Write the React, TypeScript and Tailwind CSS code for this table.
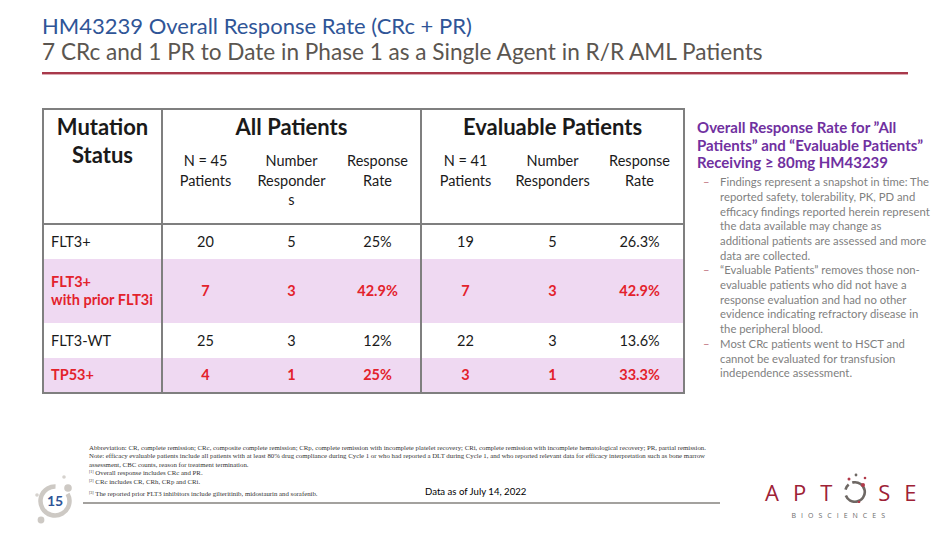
import React from 'react'

const rows = [
  { label: ['FLT3+'], vals: ['20', '5', '25%', '19', '5', '26.3%'], hl: false, h: 'h-[35px]' },
  { label: ['FLT3+', 'with prior FLT3i'], vals: ['7', '3', '42.9%', '7', '3', '42.9%'], hl: true, h: 'h-[64px]' },
  { label: ['FLT3-WT'], vals: ['25', '3', '12%', '22', '3', '13.6%'], hl: false, h: 'h-[35px]' },
  { label: ['TP53+'], vals: ['4', '1', '25%', '3', '1', '33.3%'], hl: true, h: 'h-[35px]' },
]

// line breaks as they fall on the slide
const bullets = [
  [
    'Findings represent a snapshot in time: The',
    'reported safety, tolerability, PK, PD and',
    'efficacy findings reported herein represent',
    'the data available may change as',
    'additional patients are assessed and more',
    'data are collected.',
  ],
  [
    '\u201cEvaluable Patients\u201d removes those non-',
    'evaluable patients who did not have a',
    'response evaluation and had no other',
    'evidence indicating refractory disease in',
    'the peripheral blood.',
  ],
  ['Most CRc patients went to HSCT and', 'cannot be evaluated for transfusion', 'independence assessment.'],
]

const PageBadge = () => (
  <svg width="56" height="58" viewBox="0 0 56 58">
    <circle cx="29" cy="30" r="14.5" fill="none" stroke="#cdc9c4" strokeWidth="4.5" strokeDasharray="76 15" transform="rotate(-30 29 30)" />
    <circle cx="42" cy="17" r="3.8" fill="#cdc9c4" />
    <circle cx="38" cy="6" r="1.8" fill="#d6d2ce" />
    <circle cx="11" cy="24" r="1.8" fill="#d6d2ce" />
    <circle cx="15" cy="49" r="3.4" fill="#cdc9c4" />
    <text x="29" y="35" textAnchor="middle" fontFamily="Lato, sans-serif" fontWeight="700" fontSize="14" fill="#2f5597">15</text>
  </svg>
)

const Logo = () => (
  <div className="flex flex-col items-center">
    <div className="flex items-center text-[22px] leading-[22px] font-normal text-[#9e2236] tracking-[14px]" style={{ fontFamily: '"Open Sans", sans-serif' }}>
      <span>APT</span>
      <svg width="28" height="30" viewBox="0 0 28 30" className="-ml-[4px] mr-[8px] -mt-[7px]">
        <circle cx="13" cy="19" r="9.8" fill="none" stroke="#6e6864" strokeWidth="2.6" strokeDasharray="44 6 6 4" transform="rotate(-100 13 19)" />
        <circle cx="7" cy="6" r="1.5" fill="#b23a4a" />
        <circle cx="14" cy="2" r="1.4" fill="#6e6864" />
        <circle cx="21" cy="12" r="2" fill="#b23a4a" />
        <circle cx="23" cy="5" r="1.3" fill="#b23a4a" />
        <circle cx="17" cy="29" r="1.3" fill="#b23a4a" />
      </svg>
      <span className="-mr-[14px]">SE</span>
    </div>
    <div className="mt-[9px] text-[7px] leading-[8px] tracking-[5px] text-[#6b6b6b]" style={{ fontFamily: '"Open Sans", sans-serif' }}>
      BIOSCIENCES
    </div>
  </div>
)

export default function App() {
  return (
    <div className="w-[950px] h-[534px] bg-white overflow-hidden flex flex-col" style={{ fontFamily: 'Lato, "Open Sans", sans-serif' }}>
      {/* Title */}
      <div className="pl-[42px] pt-[13px]">
        <div className="text-[22px] leading-[26px] text-[#2f5597]">HM43239 Overall Response Rate (CRc + PR)</div>
        <div className="text-[22.6px] leading-[26px] text-[#5b5650]">7 CRc and 1 PR to Date in Phase 1 as a Single Agent in R/R AML Patients</div>
        <div className="mt-[7px] w-[866px] h-[2px] bg-[#a8394b]" />
        <div className="w-[866px] h-[1px] bg-[#dcaab2]" />
      </div>

      {/* Table + notes */}
      <div className="flex mt-[33px] h-[336px]">
        <table className="ml-[42px] w-[641px] table-fixed border-collapse border-2 border-[#7f7f7f] self-start text-[#1a1a1a]">
          <colgroup>
            <col className="w-[119px]" />
            <col className="w-[86px]" />
            <col className="w-[87px]" />
            <col className="w-[86px]" />
            <col className="w-[88px]" />
            <col className="w-[87px]" />
            <col className="w-[88px]" />
          </colgroup>
          <thead>
            <tr>
              <th rowSpan={2} className="align-top pt-[3px] border-r-2 border-b-2 border-[#7f7f7f] text-[22px] leading-[28px] font-bold">
                Mutation<br />Status
              </th>
              <th colSpan={3} className="h-[38px] align-top pt-[3px] text-[22px] leading-[28px] font-bold border-r-2 border-[#7f7f7f]">All Patients</th>
              <th colSpan={3} className="h-[38px] align-top pt-[3px] text-[22px] leading-[28px] font-bold">Evaluable Patients</th>
            </tr>
            <tr className="text-[14.5px] leading-[19.5px]">
              <th className="h-[77px] align-top pt-[4px] font-normal border-b-2 border-[#7f7f7f]">N = 45<br />Patients</th>
              <th className="align-top pt-[4px] font-normal border-b-2 border-[#7f7f7f]">Number<br />Responder<br />s</th>
              <th className="align-top pt-[4px] font-normal border-b-2 border-r-2 border-[#7f7f7f]">Response<br />Rate</th>
              <th className="align-top pt-[4px] font-normal border-b-2 border-[#7f7f7f]">N = 41<br />Patients</th>
              <th className="align-top pt-[4px] font-normal border-b-2 border-[#7f7f7f]">Number<br />Responders</th>
              <th className="align-top pt-[4px] font-normal border-b-2 border-[#7f7f7f]">Response<br />Rate</th>
            </tr>
          </thead>
          <tbody className="text-[14.5px] leading-[18px]">
            {rows.map((r) => (
              <tr key={r.label.join()} className={r.hl ? 'bg-[#efd9f2] text-[#e3222c] font-bold' : ''}>
                <td className={`${r.h} pl-[7px] border-r-2 border-[#7f7f7f]`}>
                  {r.label.map((l) => (
                    <div key={l}>{l}</div>
                  ))}
                </td>
                {r.vals.map((v, i) => (
                  <td key={i} className={`text-center ${i === 2 ? 'border-r-2 border-[#7f7f7f]' : ''}`}>{v}</td>
                ))}
              </tr>
            ))}
          </tbody>
        </table>

        <div className="ml-[12px] pt-[11px]">
          <div className="text-[15px] leading-[17.7px] font-bold text-[#7030a0] whitespace-nowrap">
            Overall Response Rate for &rdquo;All<br />
            Patients&rdquo; and &ldquo;Evaluable Patients&rdquo;<br />
            Receiving &ge; 80mg HM43239
          </div>
          <div className="mt-[3px]">
            {bullets.map((b) => (
              <div key={b[0]} className="flex text-[11.3px] leading-[14.7px] text-[#7f7f7f]">
                <span className="ml-[6px] w-[17px] shrink-0 text-[#c0707c]">&ndash;</span>
                <div className="whitespace-nowrap">
                  {b.map((l) => (
                    <div key={l}>{l}</div>
                  ))}
                </div>
              </div>
            ))}
          </div>
        </div>
      </div>

      {/* Footer */}
      <div className="flex">
        <div className="w-[83px] pl-[26px] pt-[27px]">
          <PageBadge />
        </div>
        <div className="w-[637px]">
          <div className="pl-[6px] text-[6.8px] leading-[8.4px] text-[#333]" style={{ fontFamily: '"Liberation Serif", serif' }}>
            <div className="whitespace-nowrap">Abbreviation: CR, complete remission; CRc, composite complete remission; CRp, complete remission with incomplete platelet recovery; CRi, complete remission with incomplete hematological recovery; PR, partial remission.</div>
            <div className="whitespace-nowrap">Note: efficacy evaluable patients include all patients with at least 80% drug compliance during Cycle 1 or who had reported a DLT during Cycle 1, and who reported relevant data for efficacy interpretation such as bone marrow</div>
            <div className="whitespace-nowrap">assessment, CBC counts, reason for treatment termination.</div>
            <div className="whitespace-nowrap"><sup className="text-[4px]">[1]</sup> Overall response includes CRc and PR.</div>
            <div className="whitespace-nowrap"><sup className="text-[4px]">[2]</sup> CRc includes CR, CRh, CRp and CRi.</div>
            <div className="flex items-end">
              <div className="w-[336px] whitespace-nowrap"><sup className="text-[4px]">[3]</sup> The reported prior FLT3 inhibitors include gilteritinib, midostaurin and sorafenib.</div>
              <div className="text-[9.6px] leading-[12px] text-black" style={{ fontFamily: 'Lato, sans-serif' }}>Data as of July 14, 2022</div>
            </div>
          </div>
          <div className="mt-[4px] h-[2px] bg-[#a3a19e]" />
        </div>
        <div className="ml-[45px] pt-[36px]">
          <Logo />
        </div>
      </div>
    </div>
  )
}
